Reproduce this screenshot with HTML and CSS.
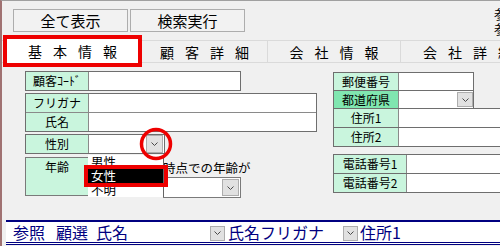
FILE: index.html
```html
<!DOCTYPE html>
<html lang="ja">
<head>
<meta charset="utf-8">
<title>基本情報</title>
<link rel="stylesheet" href="styles.css">
</head>
<body>
<div class="frame">
  <div class="toolbar">
    <button class="btn">全て表示</button>
    <button class="btn b2">検索実行</button>
    <div class="corner">参<br>参</div>
  </div>
  <div class="tabs">
    <div class="tab active">基本情報</div>
    <div class="tab t2">顧客詳細</div>
    <div class="tab t3">会社情報</div>
    <div class="tab t4">会社詳細</div>
  </div>
  <div class="form">
    <div class="col left">
      <div class="box w216">
        <div class="row"><div class="lbl">顧客ｺｰﾄﾞ</div><div class="inp"></div></div>
      </div>
      <div class="box w292 mt2">
        <div class="row"><div class="lbl">フリガナ</div><div class="inp"></div></div>
        <div class="row sep"><div class="lbl">氏名</div><div class="inp"></div></div>
      </div>
      <div class="box w140 mt2">
        <div class="row"><div class="lbl">性別</div><div class="inp"><span class="dd dd-full"><svg width="7" height="4" viewBox="0 0 7 4"><polyline points="0.5,0.5 3.5,3.5 6.5,0.5" fill="none" stroke="#4a4a4a" stroke-width="1"/></svg></span></div></div>
      </div>
      <div class="agerow">
        <div class="agelbl">年齢</div>
        <div class="ageside">
          <div class="agetext">時点での年齢が</div>
          <div class="select"><span class="dd dd-sel"><svg width="7" height="4" viewBox="0 0 7 4"><polyline points="0.5,0.5 3.5,3.5 6.5,0.5" fill="none" stroke="#4a4a4a" stroke-width="1"/></svg></span></div>
        </div>
      </div>
    </div>
    <div class="col right">
      <div class="rrow w141"><div class="lbl rl">郵便番号</div><div class="inp"></div></div>
      <div class="rrow w141 ov"><div class="lbl rl dark">都道府県</div><div class="inp"><span class="dd dd-pref"><svg width="7" height="4" viewBox="0 0 7 4"><polyline points="0.5,0.5 3.5,3.5 6.5,0.5" fill="none" stroke="#4a4a4a" stroke-width="1"/></svg></span></div></div>
      <div class="rrow wide ov tall"><div class="lbl rl">住所1</div><div class="inp"></div></div>
      <div class="rrow wide ov tall"><div class="lbl rl">住所2</div><div class="inp"></div></div>
      <div class="rrow wide tall phone1"><div class="lbl pl">電話番号1</div><div class="inp"></div></div>
      <div class="rrow wide ov tall"><div class="lbl pl">電話番号2</div><div class="inp"></div></div>
    </div>
  </div>
  <div class="bottom">
    <span class="bt b-ref">参照</span>
    <span class="bt b-sel">顧選</span>
    <span class="bt b-name">氏名</span>
    <span class="dd dd-bot"><svg width="7" height="4" viewBox="0 0 7 4"><polyline points="0.5,0.5 3.5,3.5 6.5,0.5" fill="none" stroke="#4a4a4a" stroke-width="1"/></svg></span>
    <span class="bt b-kana">氏名フリガナ</span>
    <span class="dd dd-bot"><svg width="7" height="4" viewBox="0 0 7 4"><polyline points="0.5,0.5 3.5,3.5 6.5,0.5" fill="none" stroke="#4a4a4a" stroke-width="1"/></svg></span>
    <span class="bt b-addr">住所1</span>
  </div>

  <div class="droplist">
    <div class="item">男性</div>
    <div class="item on">女性</div>
    <div class="item">不明</div>
  </div>
  <div class="redbox"></div>
  <svg class="ring" width="34" height="34" viewBox="0 0 34 34"><circle cx="17" cy="17" r="14.5" fill="none" stroke="#ee0000" stroke-width="3.5"/></svg>
</div>
</body>
</html>
```

FILE: styles.css
```css
* { box-sizing: border-box; }
html, body { margin: 0; padding: 0; }
body {
  width: 500px;
  height: 246px;
  overflow: hidden;
  background: #f0f0f0;
  font-family: "Noto Sans CJK JP", "Noto Sans", sans-serif;
  color: #000;
}
.frame {
  position: relative;
  width: 500px;
  height: 246px;
  border-top: 1px solid #a0a0a0;
  border-left: 2px solid #a07272;
  display: flex;
  flex-direction: column;
  overflow: hidden;
  padding-bottom: 1px;
}
.toolbar {
  display: flex;
  align-items: flex-start;
  padding-top: 8px;
  padding-left: 11px;
  height: 39px;
}
.btn {
  width: 115px;
  height: 23px;
  margin: 0;
  padding: 0;
  background: #f2f2f2;
  border: 1px solid #adadad;
  font-family: inherit;
  font-size: 15px;
  line-height: 20px;
  color: #000;
}
.b2 { margin-left: 2px; }
.corner {
  margin-left: auto;
  margin-right: -10px;
  margin-top: -3px;
  font-size: 13px;
  line-height: 15px;
  width: 16px;
}
.tabs {
  display: flex;
  height: 23px;
  border-top: 1px solid #dadada;
  border-bottom: 1px solid #dadada;
}
.tab {
  display: flex;
  align-items: center;
  justify-content: center;
  font-size: 14px;
  letter-spacing: 11px;
  padding-left: 11px;
  line-height: 16px;
  border-right: 1px solid #dadada;
  flex: none;
}
.tab.active {
  width: 139px;
  margin: -6px 0 -5px 1px;
  background: #fff;
  border: 4px solid #ee0000;
  position: relative;
  z-index: 1;
}
.t2 { width: 126px; }
.t3 { width: 133px; }
.t4 { width: 134px; }

.form {
  display: flex;
  padding-left: 23px;
  margin-top: 8px;
}
.col { display: flex; flex-direction: column; flex: none; }
.left { width: 292px; }
.right { margin-left: 16px; padding-top: 1px; }

.box {
  border: 1px solid #6e6e6e;
  background: #fff;
}
.w216 { width: 216px; }
.w292 { width: 292px; }
.w140 { width: 140px; }
.mt2 { margin-top: 2px; }
.row {
  display: flex;
  height: 18px;
}
.row.sep { height: 19px; border-top: 1px solid #8a8a8a; }
.lbl {
  flex: none;
  width: 63px;
  background: #c9f5dd;
  border-right: 1px solid #8a8a8a;
  font-size: 12px;
  line-height: 17px;
  text-align: center;
}
.inp {
  flex: 1;
  background: #fff;
  position: relative;
  display: flex;
  justify-content: flex-end;
}
.dd {
  display: inline-flex;
  align-items: center;
  justify-content: center;
  background: #e1e1e1;
  border: 1px solid #adadad;
  flex: none;
}
.dd-full { width: 17px; height: 18px; margin-right: 1px; }
.dd-pref { width: 16px; height: 15px; margin-top: 1px; }

.agerow {
  display: flex;
  margin-top: 3px;
}
.agelbl {
  width: 64px;
  height: 39px;
  background: #c9f5dd;
  border: 1px solid #7a7a7a;
  font-size: 12px;
  line-height: 14px;
  padding-top: 2px;
  text-align: center;
}
.ageside {
  display: flex;
  flex-direction: column;
  padding-left: 74px;
}
.agetext {
  font-size: 12.5px;
  line-height: 14px;
  padding-top: 4px;
  height: 20px;
  white-space: nowrap;
}
.select {
  width: 78px;
  height: 21px;
  background: #fff;
  border: 1px solid #7a7a7a;
  display: flex;
  justify-content: flex-end;
  align-items: center;
  padding-right: 1px;
}
.dd-sel { width: 17px; height: 17px; }

.rrow {
  display: flex;
  height: 19px;
  border: 1px solid #6e6e6e;
  background: #fff;
}
.rrow.tall { height: 20px; }
.rrow.ov { margin-top: -1px; }
.w141 { width: 141px; }
.wide { width: 200px; }
.rl { width: 65px; }
.pl { width: 73px; }
.dark { background: #80e6b0; }
.phone1 { margin-top: 7px; }

.bottom {
  margin-top: auto;
  margin-left: 4px;
  height: 25px;
  background: #fff;
  border-top: 2px solid #000080;
  border-bottom: 3px double #000080;
  display: flex;
  align-items: center;
  color: #000080;
  font-size: 16px;
  line-height: 18px;
  white-space: nowrap;
}
.bt { flex: none; }
.b-ref { margin-left: 7px; }
.b-sel { margin-left: 11px; }
.b-name { margin-left: 8px; }
.dd-bot { width: 15px; height: 15px; margin-top: 2px; }
.b-name + .dd-bot { margin-left: 82px; }
.b-kana { margin-left: 3px; }
.b-kana + .dd-bot { margin-left: 19px; }
.b-addr { margin-left: 2px; }

.droplist {
  position: absolute;
  left: 86px;
  top: 154px;
  width: 76px;
  height: 42px;
  background: #fff;
  border-right: 1px solid #646464;
  z-index: 2;
}
.item {
  height: 14px;
  font-size: 12.5px;
  line-height: 14px;
  padding-left: 3px;
}
.item.on { background: #000; color: #fff; }
.redbox {
  position: absolute;
  left: 82px;
  top: 164px;
  width: 84px;
  height: 22px;
  border: 4px solid #ee0000;
  z-index: 3;
}
.ring {
  position: absolute;
  left: 137px;
  top: 126px;
  z-index: 3;
}
```
